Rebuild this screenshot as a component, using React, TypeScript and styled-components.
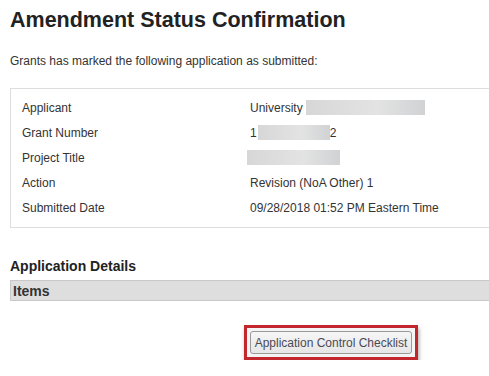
import styled, { createGlobalStyle } from "styled-components";

const GlobalStyle = createGlobalStyle`
  html, body {
    margin: 0;
    padding: 0;
    background: #fff;
  }
  body {
    font-family: "Liberation Sans", Arial, sans-serif;
    color: #222;
    overflow: hidden;
  }
`;

type Row = { label: string; value?: string; blur?: { before?: string; width: number; after?: string; offset?: number } };

const rows: Row[] = [
  { label: "Applicant", blur: { before: "University", width: 119, offset: 3 } },
  { label: "Grant Number", blur: { before: "1", width: 72, after: "2", offset: 1 } },
  { label: "Project Title", blur: { width: 93, offset: -3 } },
  { label: "Action", value: "Revision (NoA Other) 1" },
  { label: "Submitted Date", value: "09/28/2018 01:52 PM Eastern Time" },
];

function App() {
  return (
    <>
      <GlobalStyle />
      <Page>
        <Title>Amendment Status Confirmation</Title>
        <Intro>Grants has marked the following application as submitted:</Intro>
        <InfoBox>
          {rows.map((row) => (
            <InfoRow key={row.label}>
              <Label>{row.label}</Label>
              <Value>
                {row.value}
                {row.blur && (
                  <>
                    {row.blur.before}
                    <Redacted $width={row.blur.width} $offset={row.blur.offset ?? 0} />
                    {row.blur.after}
                  </>
                )}
              </Value>
            </InfoRow>
          ))}
        </InfoBox>
        <SectionTitle>Application Details</SectionTitle>
        <ItemsBar>Items</ItemsBar>
        <ButtonRow>
          <Highlight>
            <ChecklistButton>Application Control Checklist</ChecklistButton>
          </Highlight>
        </ButtonRow>
      </Page>
    </>
  );
}

const Page = styled.div`
  padding: 0 0 0 10px;
`;

const Title = styled.h1`
  margin: 0;
  padding-top: 7px;
  font-size: 21.5px;
  line-height: 27px;
  font-weight: bold;
  color: #222;
`;

const Intro = styled.p`
  margin: 0;
  padding-top: 20px;
  font-size: 12px;
  line-height: 14px;
  color: #333;
`;

const InfoBox = styled.div`
  margin-top: 20px;
  border: 1px solid #ddd;
  border-right: none;
  height: 140px;
  box-sizing: border-box;
  padding: 6px 0 0 11px;
`;

const InfoRow = styled.div`
  display: grid;
  grid-template-columns: 228px 1fr;
  height: 25px;
  align-items: center;
  font-size: 12px;
  color: #333;
`;

const Label = styled.span``;

const Value = styled.span`
  display: flex;
  align-items: center;
  white-space: nowrap;
`;

const Redacted = styled.span<{ $width: number; $offset: number }>`
  display: inline-block;
  width: ${(p) => p.$width}px;
  height: 15px;
  margin-left: ${(p) => p.$offset}px;
  background: linear-gradient(90deg, #d7d7d7, #e3e3e3 60%, #d0d2d4);
`;

const SectionTitle = styled.h2`
  margin: 30px 0 0;
  font-size: 14px;
  line-height: 16px;
  font-weight: bold;
  color: #222;
`;

const ItemsBar = styled.div`
  margin-top: 6px;
  height: 21px;
  box-sizing: border-box;
  border: 1px solid #c8c8c8;
  border-right: none;
  background: #dedede;
  padding-left: 2px;
  font-size: 14px;
  line-height: 20px;
  font-weight: bold;
  color: #333;
`;

const ButtonRow = styled.div`
  display: flex;
  padding: 24px 0 0 234px;
`;

const Highlight = styled.div`
  border: 3px solid #c1272d;
  padding: 3px;
  box-shadow: 1px 3px 4px rgba(0, 0, 0, 0.35);
  background: #f4f4f4;
`;

const ChecklistButton = styled.button`
  display: block;
  width: 162px;
  height: 23px;
  padding: 0;
  border: 1px solid #999;
  border-radius: 3px;
  background: linear-gradient(#f6f6f6, #e6e6e6);
  font-family: "Liberation Sans", Arial, sans-serif;
  font-size: 12px;
  color: #4a4a55;
  cursor: pointer;
`;

export default App;
